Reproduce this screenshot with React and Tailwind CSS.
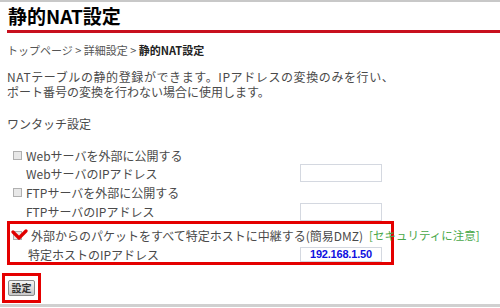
import { useState } from "react";

/* 静的NAT設定 — ルーター設定画面の一部 */

const font = { fontFamily: '"Noto Sans CJK JP", "Noto Sans", sans-serif' };

function Box({ value, className = "" }) {
  return (
    <div
      className={`flex w-[82px] items-center border border-[#d4d8e0] bg-white pl-[9px] font-['Liberation_Sans',Arial,sans-serif] text-[11px] font-bold leading-none tracking-[-0.2px] text-[#1010e0] ${className}`}
    >
      {value}
    </div>
  );
}

function Check() {
  return <span className="inline-block h-[9px] w-[9px] shrink-0 border border-[#b0b0b0] bg-[#e8e8e8]" />;
}

export default function App() {
  const [rows] = useState([
    { label: "Webサーバを外部に公開する", sub: "WebサーバのIPアドレス", h1: "h-[18px]", h2: "h-[18px]" },
    { label: "FTPサーバを外部に公開する", sub: "FTPサーバのIPアドレス", h1: "h-[20px]", h2: "h-[19px]" },
  ]);

  return (
    <div
      className="h-[308px] w-[500px] overflow-hidden border-t-2 border-[#c8c8c8] bg-white text-[#4a4a4a]"
      style={font}
    >
      <div className="ml-[7px] h-[31px] border-b-[3px] border-[#c8101e] pl-[1px]">
        <h1 className="text-[19px] font-bold leading-[28px] text-black">静的NAT設定</h1>
      </div>

      <p className="ml-[7px] mt-[10px] h-[14px] whitespace-nowrap text-[11px] leading-[14px] text-[#555]">
        トップページ &gt; 詳細設定 &gt; <span className="font-bold text-[#222]">静的NAT設定</span>
      </p>

      <div className="ml-[7px] mt-[12px] text-[12px] leading-[15px]">
        <div className="h-[15px] whitespace-nowrap tracking-[0.6px]">
          NATテーブルの静的登録ができます。IPアドレスの変換のみを行い、
        </div>
        <div className="h-[15px] whitespace-nowrap">ポート番号の変換を行わない場合に使用します。</div>
      </div>

      <div className="ml-[7px] mt-[17px] h-[15px] text-[12px] leading-[15px]">ワンタッチ設定</div>

      <div className="mt-[15px] text-[12px] leading-[15px]">
        {rows.map((r) => (
          <div key={r.label}>
            <div className={`flex items-center gap-[4px] pl-[13px] ${r.h1}`}>
              <Check />
              <span className="whitespace-nowrap">{r.label}</span>
            </div>
            <div className={`flex items-center ${r.h2}`}>
              <span className="w-[300px] whitespace-nowrap pl-[26px]">{r.sub}</span>
              <Box className="h-[18px]" />
            </div>
          </div>
        ))}
      </div>

      <div className="ml-[7px] h-[44px] w-[387px] border-[3px] border-[#e40000] text-[12px] leading-[15px]">
        <div className="flex h-[22px] items-center whitespace-nowrap pl-[3px]">
          <span className="relative inline-block h-[9px] w-[9px] shrink-0 border border-[#b0b0b0] bg-[#e8e8e8]">
            <svg className="absolute -left-[3px] -top-[3px]" width="17" height="12" viewBox="0 0 17 12">
              <polyline
                points="2,3 8,9 15,2"
                fill="none"
                stroke="#e00000"
                strokeWidth="3.2"
                strokeLinecap="round"
                strokeLinejoin="round"
              />
            </svg>
          </span>
          <span className="ml-[9px]">外部からのパケットをすべて特定ホストに中継する(簡易DMZ)</span>
          <span className="ml-[6px] text-[11.5px] text-[#4aa84a]">[セキュリティに注意]</span>
        </div>
        <div className="flex h-[16px] items-center">
          <span className="w-[290px] whitespace-nowrap pl-[18px]">特定ホストのIPアドレス</span>
          <Box className="h-[15px]" value="192.168.1.50" />
        </div>
      </div>

      <div className="ml-[2px] mt-[8px] flex h-[30px] w-[39px] items-center justify-center border-[3px] border-[#e40000]">
        <button className="h-[16px] w-[27px] rounded-[2px] border border-[#8a8a8a] bg-gradient-to-b from-[#f4f4f4] to-[#c8c8c8] text-[10px] font-bold leading-none text-[#333]">
          設定
        </button>
      </div>

      <div className="mt-[1px] h-[3px] w-full bg-[#d0d0d0]" />
    </div>
  );
}
